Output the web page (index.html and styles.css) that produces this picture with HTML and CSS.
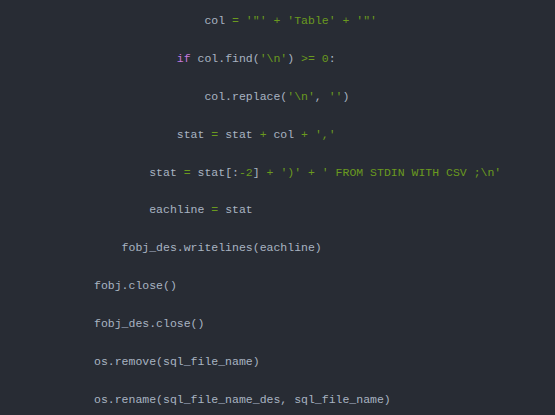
FILE: index.html
```html
<!DOCTYPE html>
<html>
<head>
<meta charset="utf-8">
<link rel="stylesheet" href="styles.css">
</head>
<body>
<pre class="code"><div class="ln">                col <span class="o">=</span> <span class="s">'"'</span> <span class="o">+</span> <span class="s">'Table'</span> <span class="o">+</span> <span class="s">'"'</span></div><div class="ln">            <span class="k">if</span> col.find(<span class="s">'\n'</span>) <span class="o">&gt;=</span> <span class="n">0</span>:</div><div class="ln">                col.replace(<span class="s">'\n'</span>, <span class="s">''</span>)</div><div class="ln">            stat <span class="o">=</span> stat <span class="o">+</span> col <span class="o">+</span> <span class="s">','</span></div><div class="ln">        stat <span class="o">=</span> stat[:<span class="n">-2</span>] <span class="o">+</span> <span class="s">')'</span> <span class="o">+</span> <span class="s">' FROM STDIN WITH CSV ;\n'</span></div><div class="ln">        eachline <span class="o">=</span> stat</div><div class="ln">    fobj_des.writelines(eachline)</div><div class="ln">fobj.close()</div><div class="ln">fobj_des.close()</div><div class="ln">os.remove(sql_file_name)</div><div class="ln">os.rename(sql_file_name_des, sql_file_name)</div></pre>
</body>
</html>
```
FILE: styles.css
```css
html, body {
  margin: 0;
  padding: 0;
  background: #282c34;
  width: 555px;
  height: 415px;
  overflow: hidden;
}
.code {
  margin: 0;
  padding: 11px 0 0 94px;
  font-family: "Liberation Mono", "DejaVu Sans Mono", monospace;
  font-size: 11.5px;
  color: #a9b4c2;
  white-space: pre;
}
.ln {
  line-height: 19px;
  height: 19px;
  margin-bottom: 18.9px;
}
.o, .s, .n {
  color: #6a9a1f;
}
.k {
  color: #c678dd;
}
```
